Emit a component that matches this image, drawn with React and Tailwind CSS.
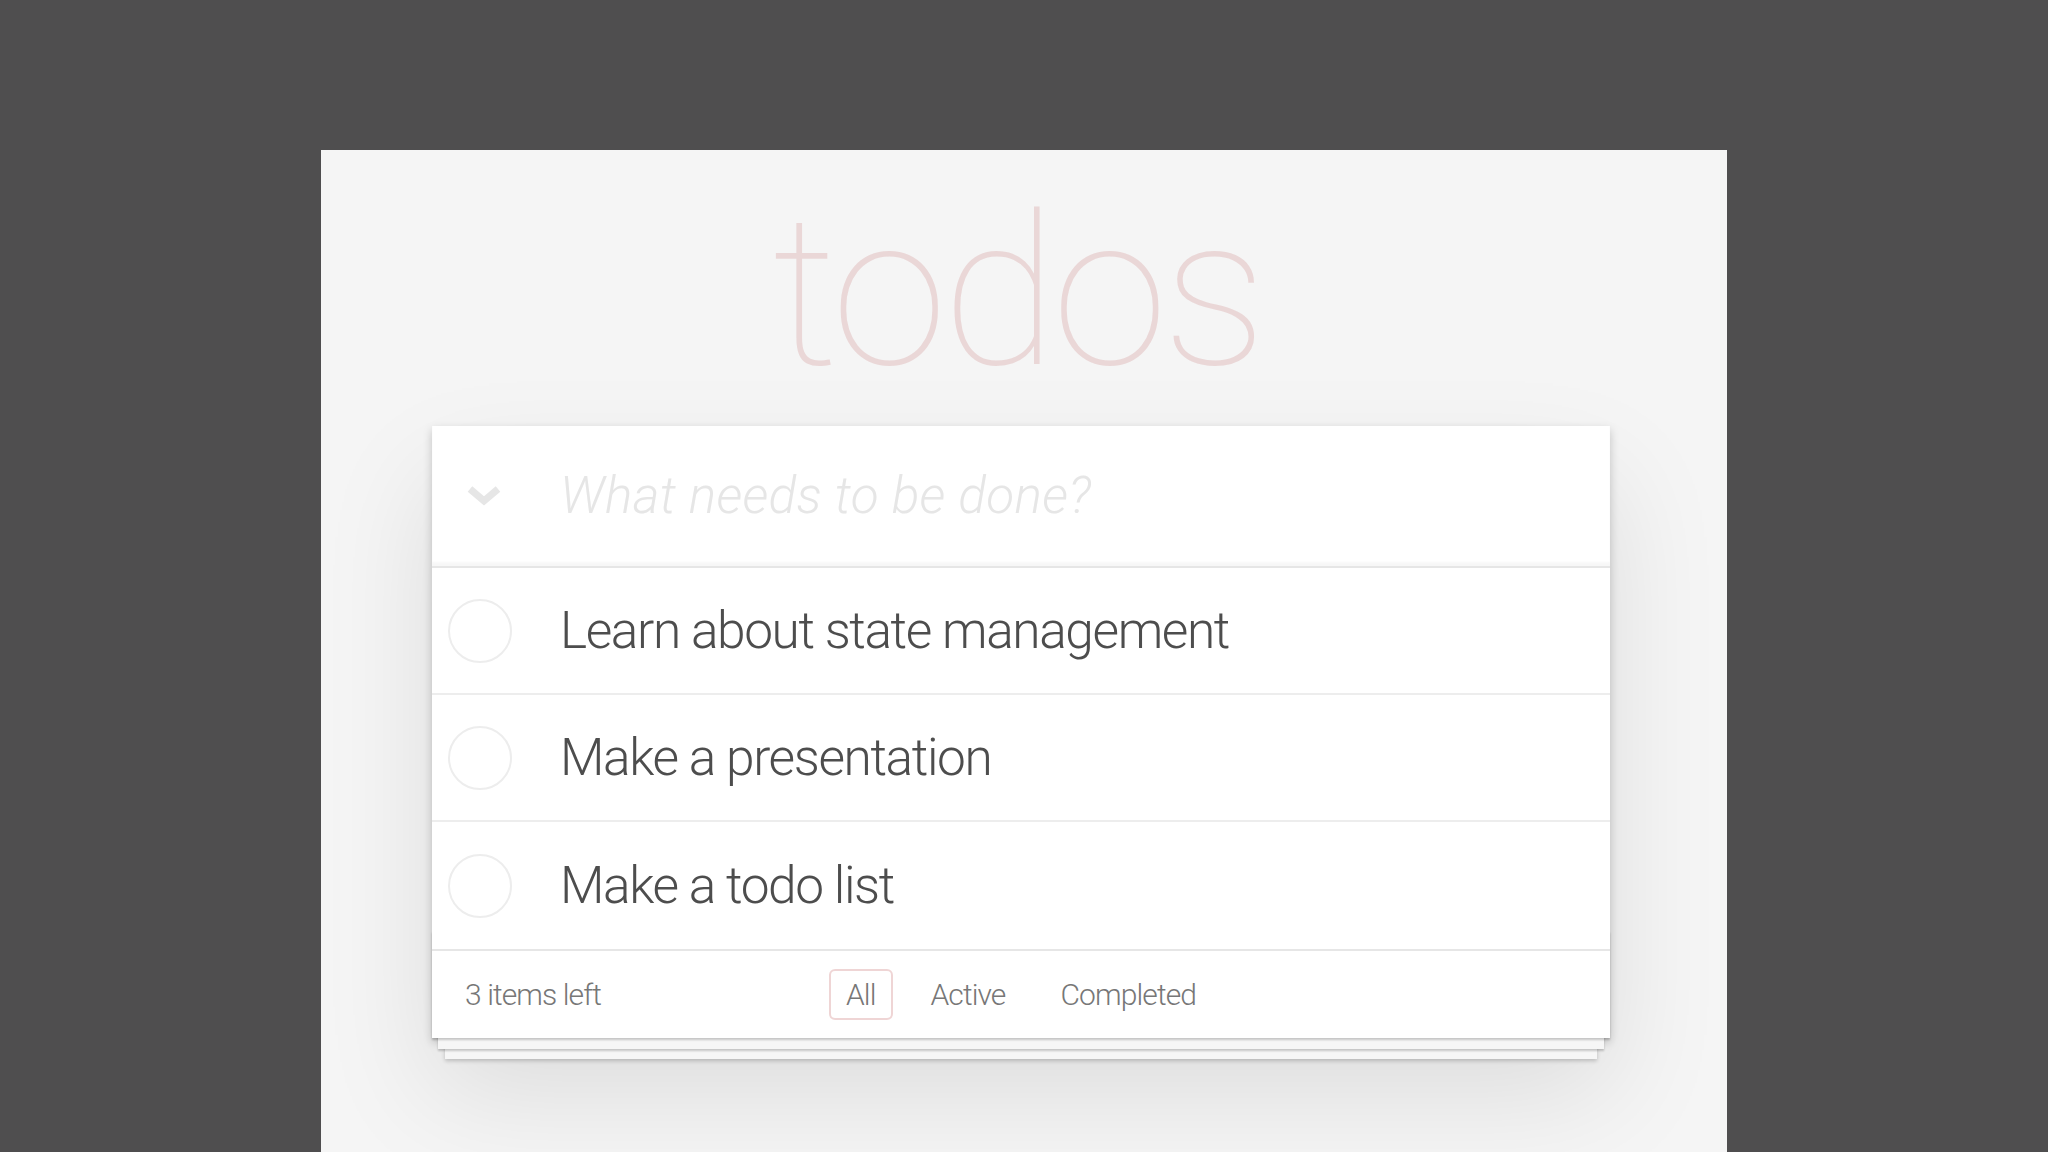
import React from "react";

const items = ["Learn about state management", "Make a presentation", "Make a todo list"];

function Circle() {
  return (
    <svg width="66" height="66" viewBox="0 0 66 66" className="shrink-0">
      <circle cx="33" cy="33" r="31" fill="none" stroke="#ededed" strokeWidth="2" />
    </svg>
  );
}

function Chevron() {
  return (
    <svg width="34" height="22" viewBox="0 0 34 22" className="shrink-0">
      <polyline points="3,4 17,16 31,4" fill="none" stroke="#e6e6e6" strokeWidth="7" strokeLinejoin="miter" />
    </svg>
  );
}

export default function App() {
  return (
    <div
      className="w-full h-[1152px] bg-[#4f4e4f] flex justify-center pt-[150px] overflow-hidden"
      style={{ fontFamily: '"Helvetica Neue", Roboto, "Liberation Sans", Arial, sans-serif' }}
    >
      <div className="w-[1406px] h-full bg-[#f5f5f5] flex flex-col">
        <div className="mt-[37px] h-[214px] text-center text-[210px] leading-none font-thin text-[rgba(175,47,47,0.15)] tracking-[-5px] pr-[14px]">
          todos
        </div>
        <div className="ml-[111px] mt-[25px] w-[1178px] bg-white relative shadow-[0_4px_9px_0_rgba(0,0,0,0.2),0_54px_107px_0_rgba(0,0,0,0.1)]">
          <div className="h-[140px] flex items-center pl-[35px] shadow-[inset_0_-4px_2px_rgba(0,0,0,0.03)]">
            <Chevron />
            <div className="ml-[59px] text-[51.4px] leading-[72px] italic font-light text-[#e6e6e6] tracking-[0.3px]">
              What needs to be done?
            </div>
          </div>
          <div className="border-t-2 border-[#e6e6e6]">
            {items.map((t, i) => (
              <div
                key={t}
                className={
                  "h-[127px] flex items-center pl-[15px] " +
                  (i < items.length - 1 ? "border-b-2 border-[#ededed]" : "")
                }
              >
                <Circle />
                <div className="ml-[47px] text-[51.4px] leading-[1.2] font-light text-[#4d4d4d] tracking-[-1.4px]">{t}</div>
              </div>
            ))}
          </div>
          <div className="relative h-[89px] border-t-2 border-[#e6e6e6] px-[33px] grid grid-cols-[1fr_auto_1fr] items-center text-[30px] font-light text-[#777] tracking-[-0.9px]">
            <div className="absolute left-0 right-0 bottom-0 h-[107px] pointer-events-none shadow-[0_2px_2px_rgba(0,0,0,0.2),0_17px_0_-6px_#f6f6f6,0_19px_2px_-6px_rgba(0,0,0,0.2),0_34px_0_-13px_#f6f6f6,0_36px_4px_-13px_rgba(0,0,0,0.2)]" />
            <div className="leading-[36px]">3 items left</div>
            <div className="flex items-center gap-[21px] relative">
              <div className="h-[51px] flex items-center px-[15px] border-2 border-[rgba(175,47,47,0.2)] rounded-[6px] leading-[36px]">All</div>
              <div className="h-[51px] flex items-center px-[15px] border-2 border-transparent rounded-[6px] leading-[36px]">Active</div>
              <div className="h-[51px] flex items-center px-[15px] border-2 border-transparent rounded-[6px] leading-[36px]">Completed</div>
            </div>
            <div />
          </div>
        </div>
      </div>
    </div>
  );
}
